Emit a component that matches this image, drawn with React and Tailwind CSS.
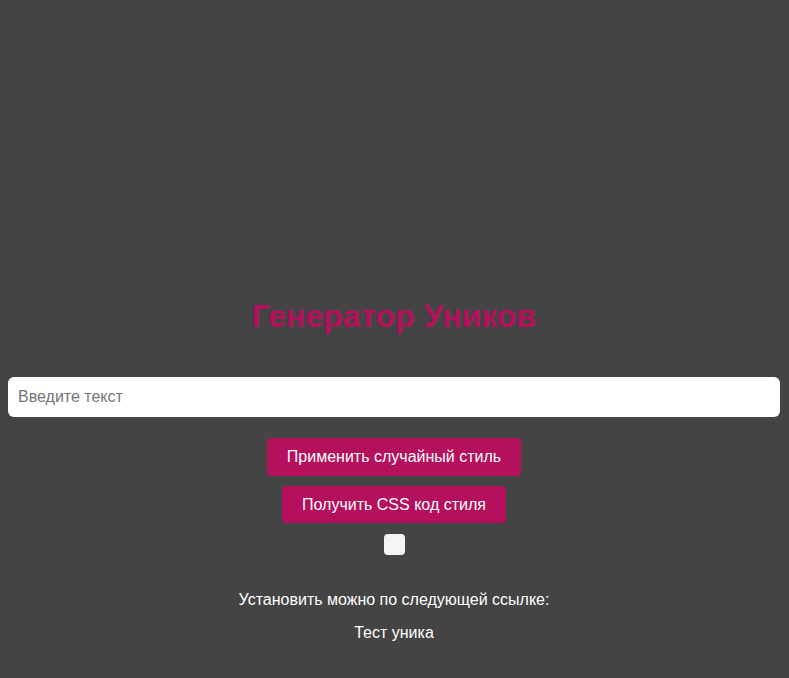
export default function App() {
  return (
    <div
      className="min-h-screen bg-[#444444] flex flex-col items-center pl-2 pr-[9px] pt-[294px] text-white"
      style={{ fontFamily: '"Liberation Sans", Arial, sans-serif' }}
    >
      <h1 className="text-[32px] leading-[44px] font-bold text-[#b5105c]">
        Генератор Уников
      </h1>
      <input
        type="text"
        placeholder="Введите текст"
        className="mt-[39px] w-full h-10 rounded-md bg-white px-[10px] text-base text-gray-800 placeholder:text-[#757575] outline-none"
      />
      <button className="mt-[21px] h-[38px] px-5 rounded bg-[#b5105c] text-base text-white">
        Применить случайный стиль
      </button>
      <button className="mt-[10px] h-[37px] px-5 rounded bg-[#b5105c] text-base text-white">
        Получить CSS код стиля
      </button>
      <input
        type="checkbox"
        className="mt-[11px] w-[21px] h-[21px] appearance-none rounded bg-[#f4f4f4]"
      />
      <p className="mt-[35px] text-base leading-5">Установить можно по следующей ссылке:</p>
      <p className="mt-[13px] text-base leading-5">Тест уника</p>
    </div>
  )
}
